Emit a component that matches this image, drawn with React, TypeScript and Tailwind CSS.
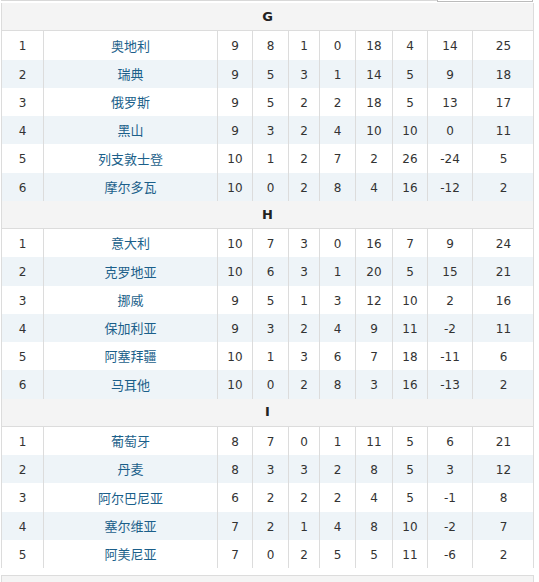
import React from "react";

// Group standings, World Cup qualifying style table (groups G, H, I).
type Row = [number, string, number, number, number, number, number, number, number, number];

const groups: { name: string; rows: Row[] }[] = [
  {
    name: "G",
    rows: [
      [1, "奥地利", 9, 8, 1, 0, 18, 4, 14, 25],
      [2, "瑞典", 9, 5, 3, 1, 14, 5, 9, 18],
      [3, "俄罗斯", 9, 5, 2, 2, 18, 5, 13, 17],
      [4, "黑山", 9, 3, 2, 4, 10, 10, 0, 11],
      [5, "列支敦士登", 10, 1, 2, 7, 2, 26, -24, 5],
      [6, "摩尔多瓦", 10, 0, 2, 8, 4, 16, -12, 2],
    ],
  },
  {
    name: "H",
    rows: [
      [1, "意大利", 10, 7, 3, 0, 16, 7, 9, 24],
      [2, "克罗地亚", 10, 6, 3, 1, 20, 5, 15, 21],
      [3, "挪威", 9, 5, 1, 3, 12, 10, 2, 16],
      [4, "保加利亚", 9, 3, 2, 4, 9, 11, -2, 11],
      [5, "阿塞拜疆", 10, 1, 3, 6, 7, 18, -11, 6],
      [6, "马耳他", 10, 0, 2, 8, 3, 16, -13, 2],
    ],
  },
  {
    name: "I",
    rows: [
      [1, "葡萄牙", 8, 7, 0, 1, 11, 5, 6, 21],
      [2, "丹麦", 8, 3, 3, 2, 8, 5, 3, 12],
      [3, "阿尔巴尼亚", 6, 2, 2, 2, 4, 5, -1, 8],
      [4, "塞尔维亚", 7, 2, 1, 4, 8, 10, -2, 7],
      [5, "阿美尼亚", 7, 0, 2, 5, 5, 11, -6, 2],
    ],
  },
];

const cols = "grid-cols-[42px_174px_35px_36px_31px_36px_37px_35px_45px_61px]";

export default function App() {
  return (
    <div className="w-[539px] h-[582px] overflow-hidden bg-white text-[12px] text-[#333] font-['DejaVu_Sans','Noto_Sans_CJK_SC',sans-serif]">
      {/* bits of the tab strip above the table */}
      <div className="h-[3px] ml-[1px] w-[532px] border-t border-[#d8d8d8] relative">
        <div className="absolute left-[436px] top-[-1px] w-[96px] h-[2px] border-x border-b border-[#bbb] bg-white" />
      </div>
      <div className="ml-[1px] w-[533px] border-l border-r border-[#dcdcdc]">
        {groups.map((g) => (
          <div key={g.name}>
            <div className="h-[28.25px] flex items-center justify-center bg-[#f4f4f4] border-b border-[#dcdcdc] font-bold text-[13px] text-[#222]">
              {g.name}
            </div>
            {g.rows.map((r, i) => (
              <div
                key={i}
                className={`grid ${cols} h-[28.25px] ${i % 2 === 1 ? "bg-[#eef4f8]" : "bg-white"}`}
              >
                {r.map((v, j) => (
                  <div
                    key={j}
                    className={`flex items-center justify-center pt-[2px] ${j < 9 ? "border-r border-[#dcdcdc]" : ""} ${j === 1 ? "text-[#1b5f8a] text-[13px]" : ""}`}
                  >
                    {v}
                  </div>
                ))}
              </div>
            ))}
          </div>
        ))}
      </div>
      <div className="mt-[7px] ml-[1px] w-[533px] h-[20px] border-t border-l border-r border-[#dcdcdc] bg-[#f4f4f4]" />
    </div>
  );
}
